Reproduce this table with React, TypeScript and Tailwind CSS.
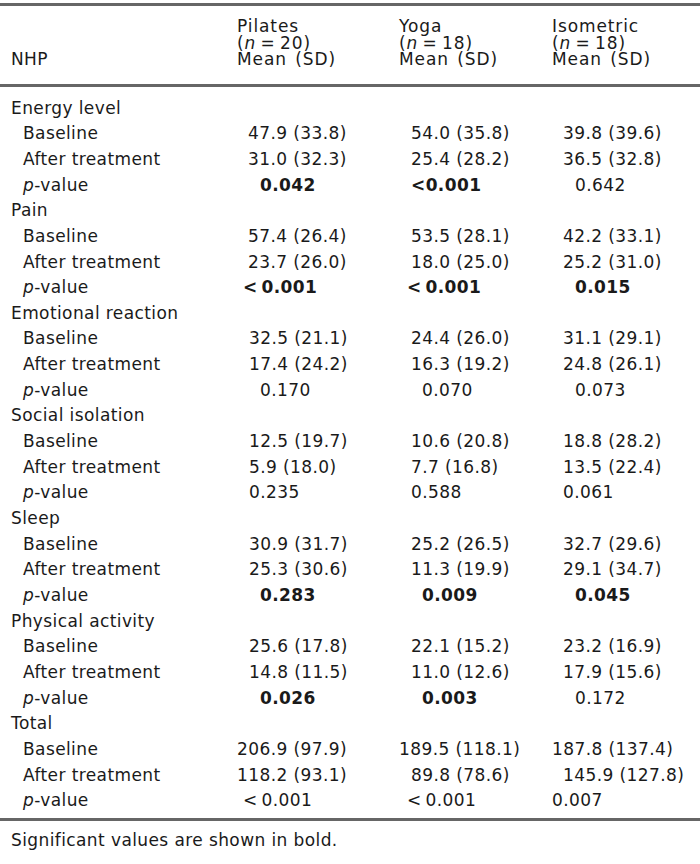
import React from 'react';

type Cell = { v: string; pad: number; bold?: boolean };
type Row = { label: string; sub?: boolean; p?: boolean; cells?: Cell[] };

// left offset of each value inside its column, taken from the reference
const padClass: Record<number, string> = {
  0: 'pl-0',
  6: 'pl-[6px]',
  8: 'pl-2',
  11: 'pl-[11px]',
  12: 'pl-3',
  23: 'pl-[23px]',
};

const LT = '<\u20090.001';

const c = (v: string, pad: number, bold = false): Cell => ({ v, pad, bold });

const rows: Row[] = [
  { label: 'Energy level' },
  { label: 'Baseline', sub: true, cells: [c('47.9 (33.8)', 11), c('54.0 (35.8)', 12), c('39.8 (39.6)', 11)] },
  { label: 'After treatment', sub: true, cells: [c('31.0 (32.3)', 11), c('25.4 (28.2)', 12), c('36.5 (32.8)', 11)] },
  { label: 'value', sub: true, p: true, cells: [c('0.042', 23, true), c('<0.001', 12, true), c('0.642', 23)] },
  { label: 'Pain' },
  { label: 'Baseline', sub: true, cells: [c('57.4 (26.4)', 11), c('53.5 (28.1)', 12), c('42.2 (33.1)', 11)] },
  { label: 'After treatment', sub: true, cells: [c('23.7 (26.0)', 11), c('18.0 (25.0)', 12), c('25.2 (31.0)', 11)] },
  { label: 'value', sub: true, p: true, cells: [c(LT, 6, true), c(LT, 8, true), c('0.015', 23, true)] },
  { label: 'Emotional reaction' },
  { label: 'Baseline', sub: true, cells: [c('32.5 (21.1)', 12), c('24.4 (26.0)', 12), c('31.1 (29.1)', 11)] },
  { label: 'After treatment', sub: true, cells: [c('17.4 (24.2)', 12), c('16.3 (19.2)', 12), c('24.8 (26.1)', 11)] },
  { label: 'value', sub: true, p: true, cells: [c('0.170', 23), c('0.070', 23), c('0.073', 23)] },
  { label: 'Social isolation' },
  { label: 'Baseline', sub: true, cells: [c('12.5 (19.7)', 12), c('10.6 (20.8)', 12), c('18.8 (28.2)', 11)] },
  { label: 'After treatment', sub: true, cells: [c('5.9 (18.0)', 12), c('7.7 (16.8)', 12), c('13.5 (22.4)', 11)] },
  { label: 'value', sub: true, p: true, cells: [c('0.235', 12), c('0.588', 12), c('0.061', 11)] },
  { label: 'Sleep' },
  { label: 'Baseline', sub: true, cells: [c('30.9 (31.7)', 12), c('25.2 (26.5)', 12), c('32.7 (29.6)', 11)] },
  { label: 'After treatment', sub: true, cells: [c('25.3 (30.6)', 12), c('11.3 (19.9)', 12), c('29.1 (34.7)', 11)] },
  { label: 'value', sub: true, p: true, cells: [c('0.283', 23, true), c('0.009', 23, true), c('0.045', 23, true)] },
  { label: 'Physical activity' },
  { label: 'Baseline', sub: true, cells: [c('25.6 (17.8)', 12), c('22.1 (15.2)', 12), c('23.2 (16.9)', 11)] },
  { label: 'After treatment', sub: true, cells: [c('14.8 (11.5)', 12), c('11.0 (12.6)', 12), c('17.9 (15.6)', 11)] },
  { label: 'value', sub: true, p: true, cells: [c('0.026', 23, true), c('0.003', 23, true), c('0.172', 23)] },
  { label: 'Total' },
  { label: 'Baseline', sub: true, cells: [c('206.9 (97.9)', 0), c('189.5 (118.1)', 0), c('187.8 (137.4)', 0)] },
  { label: 'After treatment', sub: true, cells: [c('118.2 (93.1)', 0), c('89.8 (78.6)', 12), c('145.9 (127.8)', 11)] },
  { label: 'value', sub: true, p: true, cells: [c(LT, 6), c(LT, 8), c('0.007', 0)] },
];

const groups = [
  { name: 'Pilates', n: '20' },
  { name: 'Yoga', n: '18' },
  { name: 'Isometric', n: '18' },
];

const grid = 'grid grid-cols-[237px_162px_153px_1fr]';

export default function App() {
  return (
    <div
      className="w-[700px] h-[864px] bg-white text-[#1a1a1a] text-[17px] tracking-[0.4px]"
      style={{ fontFamily: '"DejaVu Sans", Verdana, sans-serif' }}
    >
      <div className="pt-[3px]">
        <div className="h-[3px] bg-[#666]" />

        {/* Header */}
        <div className={`${grid} pt-[12px] pb-[16px] leading-[16.5px]`}>
          <div className="pl-[11px] flex items-end">NHP</div>
          {groups.map((g) => (
            <div key={g.name} className="flex flex-col tracking-[0.9px] [word-spacing:2px]">
              <span>{g.name}</span>
              <span>
                (<i>n</i>{'\u2009=\u2009'}{g.n})
              </span>
              <span>Mean (SD)</span>
            </div>
          ))}
        </div>
        <div className="h-[3px] bg-[#666]" />

        {/* Body */}
        <div className="pt-[9px] pb-[4px]">
          {rows.map((r, i) => (
            <div key={i} className={`${grid} h-[25.67px] items-center`}>
              <div className={r.sub ? 'pl-[23px]' : 'pl-[11px]'}>
                {r.p ? (
                  <>
                    <i>p</i>-value
                  </>
                ) : (
                  r.label
                )}
              </div>
              {(r.cells ?? []).map((cell, j) => (
                <div key={j} className={`${padClass[cell.pad]} ${cell.bold ? 'font-bold' : ''}`}>
                  {cell.v}
                </div>
              ))}
            </div>
          ))}
        </div>
        <div className="h-[3px] bg-[#666]" />

        <div className="pl-[11px] pt-[9px] leading-[20px]">Significant values are shown in bold.</div>
      </div>
    </div>
  );
}
